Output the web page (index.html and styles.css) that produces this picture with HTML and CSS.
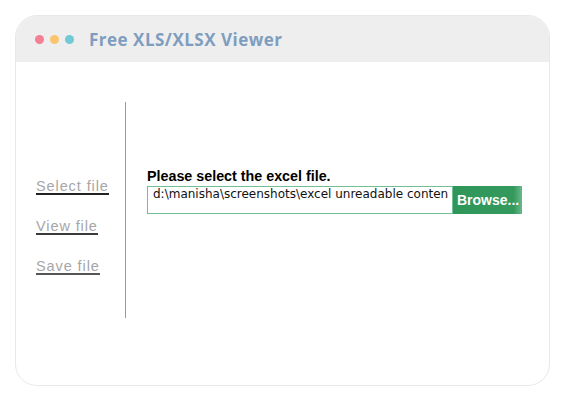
FILE: index.html
```html
<!DOCTYPE html>
<html>
<head>
<meta charset="utf-8">
<link rel="stylesheet" href="styles.css">
</head>
<body>
<div class="window">
  <div class="titlebar">
    <span class="dot red"></span>
    <span class="dot yellow"></span>
    <span class="dot teal"></span>
    <span class="title">Free XLS/XLSX Viewer</span>
  </div>
  <div class="content">
    <nav class="nav">
      <a class="nav-item active">Select file</a>
      <a class="nav-item mid">View file</a>
      <a class="nav-item last">Save file</a>
    </nav>
    <div class="divider"></div>
    <div class="panel">
      <div class="label">Please select the excel file.</div>
      <div class="picker">
        <div class="path">d:\manisha\screenshots\excel unreadable conten</div>
        <div class="browse">Browse...</div>
      </div>
    </div>
  </div>
</div>
</body>
</html>
```
FILE: styles.css
```css
html, body {
  margin: 0;
  padding: 0;
  background: #ffffff;
}
.window {
  margin: 15px 0 0 15px;
  width: 533px;
  height: 369px;
  border: 1px solid #e8e8e8;
  border-radius: 22px;
  overflow: hidden;
  background: #ffffff;
}
.titlebar {
  height: 46px;
  background: #eeeeee;
  display: flex;
  align-items: center;
  padding-left: 19px;
}
.dot {
  width: 9px;
  height: 9px;
  border-radius: 50%;
  margin-right: 6px;
}
.red { background: #f47f93; }
.yellow { background: #fac56c; }
.teal { background: #72c9d6; }
.title {
  margin-left: 9px;
  font-family: "Open Sans", sans-serif;
  font-weight: 700;
  font-size: 17px;
  color: #7f9dbf;
  letter-spacing: 0.5px;
}
.content {
  display: flex;
  padding-top: 40px;
}
.nav {
  width: 109px;
  display: flex;
  flex-direction: column;
  padding-left: 20px;
  padding-top: 78px;
  box-sizing: border-box;
}
.nav-item {
  align-self: flex-start;
  font-family: "Liberation Sans", Arial, sans-serif;
  font-size: 14.5px;
  letter-spacing: 0.9px;
  color: #a6a6a6;
  line-height: 13px;
  padding-bottom: 0;
  border-bottom: 2px solid #222222;
  margin-bottom: 25px;
}
.nav-item.mid { border-bottom-color: #3a3a3a; }
.nav-item.last { border-bottom-color: #555555; }
.divider {
  width: 1px;
  height: 216px;
  background: #9a9a9a;
}
.panel {
  padding-left: 21px;
  padding-top: 66px;
}
.label {
  font-family: "Liberation Sans", Arial, sans-serif;
  font-weight: 700;
  font-size: 14.3px;
  color: #000000;
  line-height: 16px;
  margin-bottom: 2px;
}
.picker {
  display: flex;
  height: 28px;
}
.path {
  width: 299px;
  height: 26px;
  border: 1px solid #72bf93;
  padding-left: 5px;
  font-family: "DejaVu Sans", Tahoma, sans-serif;
  font-size: 12px;
  line-height: 15px;
  color: #111111;
  white-space: nowrap;
}
.browse {
  width: 69px;
  height: 28px;
  box-sizing: border-box;
  padding-left: 4px;
  background: linear-gradient(to right, #2f9659 0%, #34995c 88%, #6ab88a 100%);
  color: #ffffff;
  font-family: "Liberation Sans", Arial, sans-serif;
  font-weight: 700;
  font-size: 14px;
  line-height: 28px;
}
```
